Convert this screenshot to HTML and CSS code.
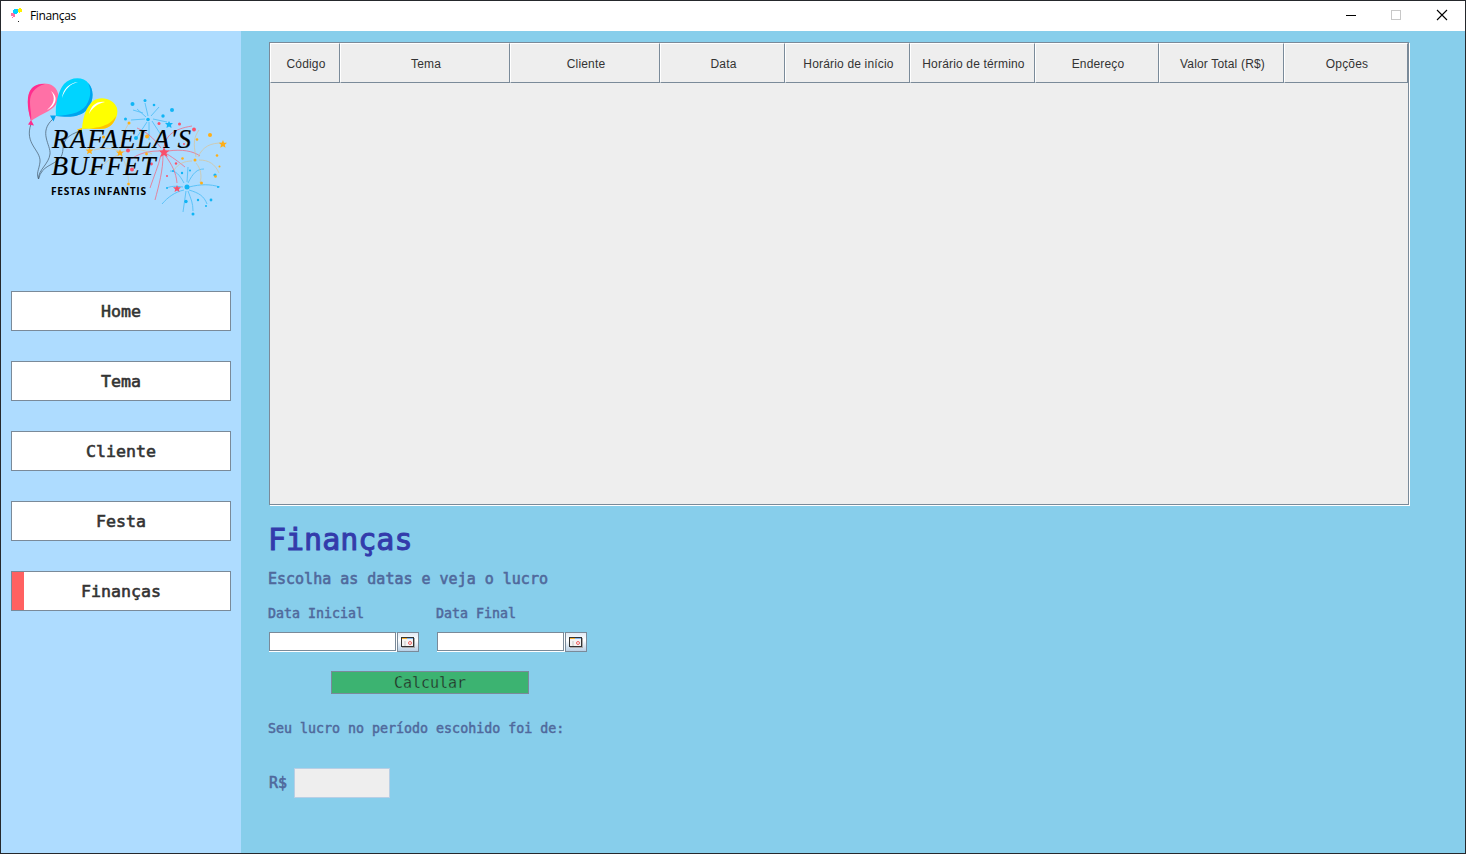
FILE: index.html
```html
<!DOCTYPE html>
<html lang="pt-BR">
<head>
<meta charset="utf-8">
<title>Finanças</title>
<link rel="stylesheet" href="styles.css">
</head>
<body>
<div class="window">
  <header class="titlebar">
    <svg class="app-icon" width="16" height="16" viewBox="0 0 16 16" shape-rendering="crispEdges">
      <path fill="#ff6fa4" d="M1 6h3v1h1v3h-2v-1h-2zM2 10h1v1h-1z"/>
      <path fill="#00d2ff" d="M4 2h4v4h-1v1h-3v-1h-1v-3h1z"/>
      <path fill="#fff000" d="M8 2h1v-1h2v1h1v3h-2v1h-1v-1h-1z"/>
      <path fill="#222" d="M8 14h1v1h-1z"/>
    </svg>
    <span class="title">Finanças</span>
    <svg class="controls" width="126" height="30" viewBox="0 0 126 30" fill="none" shape-rendering="crispEdges">
      <path stroke="#000" d="M7 14.500h10"/>
      <rect x="52.500" y="9.500" width="9" height="9" stroke="#c8c8c8"/>
      <path stroke="#000" stroke-width="1.100" shape-rendering="auto" d="M98 9l10 10M108 9l-10 10"/>
    </svg>
  </header>
  <div class="body">
    <aside class="sidebar">
      <svg class="logo" width="225" height="155" viewBox="15 65 225 155">
        <g fill="none" stroke="#4b6174" stroke-width=".75">
          <path d="M31 124C24 144 41 150 40 162C39 170 36 173 38.500 179"/>
          <path d="M53 119C38 132 51 145 50 154C49 164 38 170 38.500 179"/>
          <path d="M80 131C56 139 67 150 60 158C53 166 42 165 38.500 179"/>
        </g>
        <path fill="#ff70a6" d="M31 121C28 110 27 100 29 93C33 84 45 81 53 86C60 91 60 101 54 107C47 113 39 115 31 121z"/>
        <path fill="#ff2d8e" d="M31 121C27 107 26 95 32 88C36 84 41 84 45 84C34 87 30 94 30 102C30 110 32 115 31 121zM31 120l3 5.500l-6-1z"/>
        <path fill="#00d4ff" d="M56 116C55 105 58 91 64 84C71 77 83 76 89 84C95 92 93 105 86 111C78 118 66 116 56 116z"/>
        <path fill="#00a2ee" d="M56 116C72 115 84 112 88 102C91 95 91 89 88 83C94 88 94 101 88 108C80 119 66 117 56 116zM56 115.500l-6 0l3.500 6z"/>
        <path fill="#ff0" d="M82 129C83 117 86 107 93 101C101 95 114 99 117 108C119 117 113 125 106 128C97 130 89 128 82 129z"/>
        <path fill="#ffc400" d="M82 129C94 128 109 128 116 116C114 126 107 129 100 129C92 129 86 128 82 129zM82 128l-5 1.500l5 4z"/>
        <g fill="#fff">
          <path d="M51 91C59 97 56 106 47 110C54 104 56 98 51 91z"/>
          <path d="M78 82C69 83 63 89 62 98C65 89 70 84 78 82z"/>
          <path d="M105 102C96 101 91 106 89 114C93 107 97 104 105 102z"/>
        </g>
        <g class="rays" stroke="#36b7f5">
          <path d="M148 116l-3-13M151 116l8-9M146 117l-9-8M145 119l-14 1M147 122l-10 15M149 122l0 18M152 121l9 14M153 119l14 3M143 113l-10-3"/>
          <path d="M188 183c5-10 9-14 16-14M189 187c12-3 21-3 31 0M189 190c10 3 15 6 18 14M188 191c3 8 5 12 5 20M186 191l-3 21M184 190c-9 2-16 7-22 14M183 187c-8-1-12-1-16 1M184 183c-5-9-8-12-14-12M187 182l1-15"/>
        </g>
        <g class="rays" stroke="#f95a72">
          <path d="M161 148c-9-12-15-16-24-20M164 147c2-12 10-18 28-21M168 151c14-2 25 0 32 5M167 154c8 5 13 9 18 13M165 155c7 10 11 17 12 28M163 155c0 15-4 30-8 45M161 155c-3 12-7 21-11 33M159 151c-14 0-22 4-28 8"/>
        </g>
        <g class="rays" stroke="#ddc391">
          <path d="M119 151c-10-4-17-3-25-1M121 149c1-12 3-18 8-26M123 152c12-4 20-3 29 2M121 155c5 8 7 17 8 31M118 155c-11 5-18 12-24 20"/>
          <path d="M196 157c-3-14-2-20 3-27M198 157c5-11 13-14 24-14M199 160c10 0 16 4 20 13M196 163c5 6 6 13 4 20M192 161c-8 0-14 3-18 9"/>
        </g>
        <g fill="#10b5f5">
          <circle cx="132.500" cy="104" r="2"/><circle cx="145" cy="100.500" r="1.500"/><circle cx="154" cy="105" r="1.300"/><circle cx="172" cy="110" r="2"/><circle cx="125.500" cy="119" r="1.500"/><circle cx="148" cy="119.500" r="1.800"/><circle cx="163" cy="116" r="1.700"/><path d="M169 121l1 2h3l-2 2l.5 3l-2.500-1.500l-2.500 1.500l.5-3l-2-2h3z"/><circle cx="136" cy="138" r="2"/><circle cx="187" cy="187" r="2.500"/><circle cx="186" cy="201.500" r="1.700"/><circle cx="193" cy="214" r="1.500"/><circle cx="198" cy="200" r="1.200"/><circle cx="211" cy="200" r="1.400"/><circle cx="218" cy="187" r="1"/><circle cx="215" cy="175" r="1.600"/><circle cx="190" cy="170.500" r="1"/><circle cx="182" cy="173" r="1.200"/><circle cx="173" cy="171" r="1"/><circle cx="167" cy="188" r="1"/><circle cx="206" cy="206" r="1"/>
        </g>
        <g fill="#f9506a">
          <path d="M164 147l1.500 3.200l4 .3l-3 2.500l1 4l-3.500-2l-3.500 2l1-4l-3-2.500l4-.3z"/><path d="M177 185l1 2.200h3l-2.200 2l.7 2.800l-2.500-1.500l-2.500 1.500l.7-2.800l-2.200-2h3z"/><circle cx="159" cy="123.500" r="1.500"/><circle cx="179.500" cy="124" r="1.500"/><circle cx="194" cy="129.500" r="1.900"/><circle cx="128" cy="150.500" r="2"/><circle cx="132" cy="169.500" r="2"/><circle cx="151.500" cy="164" r="1.400"/><circle cx="167" cy="176" r="1"/><circle cx="176" cy="163.500" r="1.200"/><circle cx="184" cy="144" r="1"/>
        </g>
        <g fill="#ffae16">
          <path d="M223 140l1 2.700h3l-2.200 2l.7 3l-2.500-1.500l-2.700 1.500l.7-3l-2.200-2h3z"/><path d="M120 149l1 2.400h3l-2.200 2l.7 2.800l-2.500-1.500l-2.500 1.500l.7-2.800l-2.200-2h3z"/><path d="M89.500 147l1 2.400h3l-2.200 2l.7 2.800l-2.500-1.500l-2.500 1.500l.7-2.800l-2.200-2h3z"/><circle cx="210" cy="135" r="2"/><circle cx="197" cy="139.500" r="1.300"/><circle cx="217" cy="155.500" r="1.300"/><circle cx="219.500" cy="166.500" r="1"/><circle cx="182.500" cy="158.500" r="1.300"/><circle cx="195" cy="160" r="1.500"/><circle cx="215.500" cy="176.500" r="1.300"/><circle cx="201.500" cy="183" r="1.500"/><circle cx="146.500" cy="154" r="1.400"/><circle cx="128.500" cy="184" r="1.300"/><circle cx="147" cy="136.500" r="2"/><circle cx="129" cy="123" r="1.500"/><circle cx="103.500" cy="137" r="1.500"/><circle cx="94" cy="170" r="1.300"/>
        </g>
        <text class="brand" x="52" y="148" textLength="139">RAFAELA'S</text>
        <text class="brand" x="51.500" y="175" textLength="104">BUFFET</text>
        <text class="tagline" x="51" y="194.600" textLength="95">FESTAS INFANTIS</text>
      </svg>
      <nav class="menu">
        <button class="nav-item">Home</button>
        <button class="nav-item">Tema</button>
        <button class="nav-item">Cliente</button>
        <button class="nav-item">Festa</button>
        <button class="nav-item active">Finanças</button>
      </nav>
    </aside>
    <main class="content">
      <div class="table">
        <div class="row">
          <span class="th">Código</span><span class="th">Tema</span><span class="th">Cliente</span><span class="th">Data</span><span class="th">Horário de início</span><span class="th">Horário de término</span><span class="th">Endereço</span><span class="th">Valor Total (R$)</span><span class="th">Opções</span>
        </div>
      </div>
      <h1 class="heading">Finanças</h1>
      <p class="subtitle">Escolha as datas e veja o lucro</p>
      <div class="dates">
        <div class="date">
          <label class="label">Data Inicial</label>
          <div class="picker">
            <input class="field" type="text">
            <span class="cal"><svg width="14" height="12" viewBox="0 0 14 12" shape-rendering="crispEdges"><path fill="#aaa" d="M1 1h13v10H1z"/><path fill="#333" d="M0 0h13v10H0z"/><path fill="#f4f4f4" d="M1 2h11v7H1z"/><path fill="#f9b233" d="M1 1h5v1H1z"/><path fill="#85b7ee" d="M6 1h6v1H6z"/><path fill="#ddd" d="M3 4h2v5H3z"/><circle cx="9" cy="6" r="1.500" fill="none" stroke="#ef6262" shape-rendering="auto"/></svg></span>
          </div>
        </div>
        <div class="date">
          <label class="label">Data Final</label>
          <div class="picker">
            <input class="field" type="text">
            <span class="cal"><svg width="14" height="12" viewBox="0 0 14 12" shape-rendering="crispEdges"><path fill="#aaa" d="M1 1h13v10H1z"/><path fill="#333" d="M0 0h13v10H0z"/><path fill="#f4f4f4" d="M1 2h11v7H1z"/><path fill="#f9b233" d="M1 1h5v1H1z"/><path fill="#85b7ee" d="M6 1h6v1H6z"/><path fill="#ddd" d="M3 4h2v5H3z"/><circle cx="9" cy="6" r="1.500" fill="none" stroke="#ef6262" shape-rendering="auto"/></svg></span>
          </div>
        </div>
      </div>
      <button class="calculate">Calcular</button>
      <p class="label result-label">Seu lucro no período escohido foi de:</p>
      <div class="result">
        <span class="currency">R$</span>
        <output class="amount"></output>
      </div>
    </main>
  </div>
</div>
</body>
</html>
```

FILE: styles.css
```css
* { box-sizing: border-box; }
body { margin: 0; overflow: hidden; }
h1, p { margin: 0; }
button { padding: 0; border-radius: 0; }
.window {
  width: 1466px; height: 854px; border: 1px solid #25282c;
  display: flex; flex-direction: column; background: #87ceeb;
}
.titlebar { height: 30px; background: #fff; display: flex; align-items: center; padding-left: 9px; flex: none; }
.app-icon { margin-top: -2px; }
.title { font: 12px/16px "Open Sans", "Noto Sans", sans-serif; letter-spacing: -.35px; margin-left: 4px; color: #000; }
.controls { margin-left: auto; }
.body { display: flex; flex: 1; min-height: 0; }
.sidebar { width: 240px; background: #aedcff; padding-top: 34px; flex: none; }
.logo { display: block; margin-left: 14px; }
.rays { fill: none; stroke-width: .9; opacity: .75; }
.brand { font: italic 27px "Liberation Serif", serif; fill: #000; stroke: #000; stroke-width: .2; }
.tagline { font: bold 10.200px "Open Sans", sans-serif; fill: #000; }
.menu { display: flex; flex-direction: column; gap: 30px; padding: 71px 10px 0; }
.nav-item {
  height: 40px; border: 1px solid #7a8a99; background: #fff; color: #333; padding-top: 2px;
  font: 16.600px/36px "DejaVu Sans Mono", monospace; -webkit-text-stroke: .6px #333;
}
.nav-item.active { background: linear-gradient(to right, #ff6161 12px, #fff 12px); }
.content { flex: 1; padding: 11px 0 0 28px; display: flex; flex-direction: column; align-items: flex-start; }
.table {
  width: 1140px; height: 463px; background: #eee; border: 1px solid #7a8a99;
  box-shadow: 1px 1px #fff;
}
.row { display: grid; grid-template-columns: 70px 170px 150px 125px 125px 125px 124px 125px 124px; height: 40px; }
.th {
  height: 40px; border: 1px solid #7a8a99; border-top-color: #fff; border-left-color: #fff;
  font: 12px/40px "Liberation Sans", Arial, sans-serif; letter-spacing: .17px;
  color: #333; text-align: center; white-space: nowrap; padding-left: 2px;
}
.heading {
  font: 30px/36px "DejaVu Sans Mono", monospace; color: #333bab;
  -webkit-text-stroke: 1px #333bab; margin: 17px 0 0 -1px;
}
.subtitle { font: 15px/18px "DejaVu Sans Mono", monospace; color: #50699c; -webkit-text-stroke: .6px #50699c; margin: 12px 0 0 -1px; }
.dates { display: flex; gap: 18px; margin-top: 18px; }
.label {
  display: block; font: 13.300px/16px "DejaVu Sans Mono", monospace;
  color: #50699c; -webkit-text-stroke: .5px #50699c; margin-left: -1px; white-space: nowrap;
}
.picker { display: flex; gap: 1px; margin-top: 10px; }
.field {
  width: 127px; height: 19px; border: 1px solid #7a8a99; border-radius: 0; outline: 0; padding: 0;
  background: #fff; box-shadow: 0 1px #fff, 1px 1px #fff;
}
.cal {
  width: 22px; height: 20px; border: 1px solid #7a8a99; display: flex; padding-top: 2px;
  align-items: center; justify-content: center; background: linear-gradient(#e1eaf4, #fff 40%, #b8cfe5);
}
.calculate {
  width: 198px; height: 23px; margin: 19px 0 0 62px; border: 1px solid #7a8a99; background: #3cb371;
  color: #222; font: 15px/19px "DejaVu Sans Mono", monospace; padding-top: 2px; -webkit-text-stroke: .35px #3cb371;
}
.result-label { margin-top: 27px; }
.result { display: flex; align-items: center; margin-top: 31px; }
.currency { width: 25px; font: 15px/18px "DejaVu Sans Mono", monospace; color: #50699c; -webkit-text-stroke: .6px #50699c; }
.amount { width: 96px; height: 30px; background: #eee; border: 1px solid #b8cfe5; }
```
